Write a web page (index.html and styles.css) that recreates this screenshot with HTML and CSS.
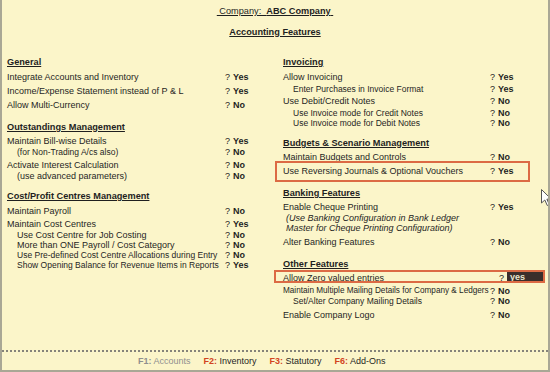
FILE: index.html
```html
<!DOCTYPE html>
<html lang="en">
<head>
    <meta charset="UTF-8">
    <meta name="viewport" content="width=device-width, initial-scale=1.0">
    <title>Accounting Features</title>
    <link rel="stylesheet" href="styles.css">
</head>
<body>
    <div class="screen">
        <div class="main">
            <!-- Title -->
            <div class="title"><span class="u">&nbsp;Company:&nbsp; <b>ABC Company</b>&nbsp;</span></div>
            <div class="subtitle"><span class="u">Accounting Features</span></div>

            <div class="columns">
                <!-- Left column -->
                <div class="col left">
                    <div class="group">
                        <div class="heading">General</div>
                        <div class="row"><span class="label">Integrate Accounts and Inventory</span><span class="q">?</span><span class="val">Yes</span></div>
                        <div class="row"><span class="label">Income/Expense Statement instead of P &amp; L</span><span class="q">?</span><span class="val">Yes</span></div>
                        <div class="row"><span class="label">Allow Multi-Currency</span><span class="q">?</span><span class="val">No</span></div>
                    </div>
                    <div class="group">
                        <div class="heading">Outstandings Management</div>
                        <div class="row compact"><span class="label">Maintain Bill-wise Details</span><span class="q">?</span><span class="val">Yes</span></div>
                        <div class="row sub small"><span class="label">(for Non-Trading A/cs also)</span><span class="q">?</span><span class="val">No</span></div>
                        <div class="row compact spaced"><span class="label">Activate Interest Calculation</span><span class="q">?</span><span class="val">No</span></div>
                        <div class="row sub"><span class="label">(use advanced parameters)</span><span class="q">?</span><span class="val">No</span></div>
                    </div>
                    <div class="group">
                        <div class="heading">Cost/Profit Centres Management</div>
                        <div class="row"><span class="label">Maintain Payroll</span><span class="q">?</span><span class="val">No</span></div>
                        <div class="row compact"><span class="label">Maintain Cost Centres</span><span class="q">?</span><span class="val">Yes</span></div>
                        <div class="row sub"><span class="label">Use Cost Centre for Job Costing</span><span class="q">?</span><span class="val">No</span></div>
                        <div class="row sub"><span class="label">More than ONE Payroll / Cost Category</span><span class="q">?</span><span class="val">No</span></div>
                        <div class="row sub small"><span class="label">Use Pre-defined Cost Centre Allocations during Entry</span><span class="q">?</span><span class="val">No</span></div>
                        <div class="row sub small"><span class="label">Show Opening Balance for Revenue Items in Reports</span><span class="q">?</span><span class="val">Yes</span></div>
                    </div>
                </div>

                <!-- Right column -->
                <div class="col right">
                    <div class="group">
                        <div class="heading">Invoicing</div>
                        <div class="row"><span class="label">Allow Invoicing</span><span class="q">?</span><span class="val">Yes</span></div>
                        <div class="row sub small"><span class="label">Enter Purchases in Invoice Format</span><span class="q">?</span><span class="val">Yes</span></div>
                        <div class="row"><span class="label">Use Debit/Credit Notes</span><span class="q">?</span><span class="val">No</span></div>
                        <div class="row sub small"><span class="label">Use Invoice mode for Credit Notes</span><span class="q">?</span><span class="val">No</span></div>
                        <div class="row sub small"><span class="label">Use Invoice mode for Debit Notes</span><span class="q">?</span><span class="val">No</span></div>
                    </div>
                    <div class="group">
                        <div class="heading">Budgets &amp; Scenario Management</div>
                        <div class="row compact"><span class="label">Maintain Budgets and Controls</span><span class="q">?</span><span class="val">No</span></div>
                        <div class="row marked budget"><span class="label">Use Reversing Journals &amp; Optional Vouchers</span><span class="q">?</span><span class="val">Yes</span></div>
                    </div>
                    <div class="group">
                        <div class="heading">Banking Features</div>
                        <div class="row compact"><span class="label">Enable Cheque Printing</span><span class="q">?</span><span class="val">Yes</span></div>
                        <div class="row sub note">(Use Banking Configuration in Bank Ledger</div>
                        <div class="row sub note">Master for Cheque Printing Configuration)</div>
                        <div class="row spaced"><span class="label">Alter Banking Features</span><span class="q">?</span><span class="val">No</span></div>
                    </div>
                    <div class="group">
                        <div class="heading">Other Features</div>
                        <div class="row compact marked zero"><span class="label wide">Allow Zero valued entries</span><span class="q">?</span><span class="field">yes</span></div>
                        <div class="row sub tiny spaced flush"><span class="label">Maintain Multiple Mailing Details for Company &amp; Ledgers</span><span class="q">?</span><span class="val">No</span></div>
                        <div class="row sub small"><span class="label">Set/Alter Company Mailing Details</span><span class="q">?</span><span class="val">No</span></div>
                        <div class="row spaced"><span class="label">Enable Company Logo</span><span class="q">?</span><span class="val">No</span></div>
                    </div>
                </div>
            </div>
        </div>

        <!-- Button bar -->
        <div class="keys">
            <span class="key off"><b>F1:</b> Accounts</span>
            <span class="key"><b>F2:</b> Inventory</span>
            <span class="key"><b>F3:</b> Statutory</span>
            <span class="key"><b>F6:</b> Add-Ons</span>
        </div>

        <!-- Mouse pointer -->
        <svg class="pointer" width="12" height="18" viewBox="0 0 12 18">
            <path d="M0.5 0.5 L0.5 14 L3.8 11 L6.3 16.5 L8.3 15.6 L5.9 10.2 L10.3 10.2 Z" fill="#ffffff" stroke="#555" stroke-width="1"/>
        </svg>
    </div>
</body>
</html>
```

FILE: styles.css
```css
/* Tally style feature screen */
body {
    margin: 0;
    background-color: #fbf5c9;
}
.screen {
    position: relative;
    width: 550px;
    height: 372px;
    box-sizing: border-box;
    border: 2px solid #a9a795;
    border-top: none;
    background-color: #fbf5c9;
    display: flex;
    flex-direction: column;
    overflow: hidden;
    font-family: "Liberation Sans", Arial, sans-serif;
    font-size: 9px;
    color: #1f1f1f;
}
.main {
    flex: 1;
    border-bottom: 2px dotted #85837a;
}
.u {
    text-decoration: underline;
}
.title {
    text-align: center;
    height: 14px;
    line-height: 14px;
    margin-top: 4px;
    font-size: 9.2px;
}
.subtitle {
    text-align: center;
    height: 14px;
    line-height: 14px;
    margin-top: 7px;
    font-weight: bold;
    font-size: 9.2px;
}
.columns {
    display: grid;
    grid-template-columns: 276px 1fr;
    margin-top: 15px;
    padding-left: 5px;
}
.group + .group {
    margin-top: 7px;
}
.heading {
    height: 16px;
    line-height: 16px;
    font-weight: bold;
    font-size: 9.2px;
    text-decoration: underline;
}
.row {
    display: flex;
    height: 14px;
    line-height: 14px;
    white-space: nowrap;
}
.row.compact {
    height: 12px;
    line-height: 12px;
}
.row.sub {
    height: 10px;
    line-height: 10px;
}
.row.spaced {
    margin-top: 2px;
}
.row.small {
    font-size: 8.5px;
}
.row.tiny {
    font-size: 8.2px;
}
.label {
    flex: 0 0 auto;
    box-sizing: border-box;
}
.left .label {
    min-width: 218px;
}
.right .label {
    min-width: 207px;
}
.right .label.wide {
    min-width: 216px;
}
.sub .label {
    padding-left: 10px;
}
.flush .label {
    padding-left: 0;
}
.row.note {
    padding-left: 3px;
    font-style: italic;
}
.q {
    display: inline-block;
    width: 8px;
}
.val {
    font-weight: bold;
}
.small .val,
.small .q,
.tiny .val,
.tiny .q {
    font-size: 9px;
}

/* red markers round highlighted rows */
.row.marked {
    position: relative;
}
.row.marked::after {
    content: "";
    position: absolute;
    border: 2px solid #dc6a44;
}
.row.budget {
    height: 15px;
    line-height: 16px;
}
.row.budget::after {
    top: -2px;
    bottom: -4px;
    left: -8px;
    right: 18px;
}
.row.zero::after {
    top: -2px;
    bottom: 1px;
    left: -9px;
    right: 3px;
}
.field {
    width: 33px;
    height: 11px;
    line-height: 11px;
    padding-left: 3px;
    background-color: #3b2e2b;
    color: #ece6d0;
    font-weight: bold;
    border-right: 1px dotted #c9b9a0;
}

/* bottom button bar */
.keys {
    display: flex;
    gap: 13px;
    height: 18px;
    line-height: 18px;
    padding-left: 136px;
    font-size: 9px;
    color: #1f1f1f;
}
.key b {
    color: #d2441f;
}
.key.off,
.key.off b {
    color: #8f8f8f;
}
.pointer {
    position: absolute;
    left: 539px;
    top: 189px;
}
```
